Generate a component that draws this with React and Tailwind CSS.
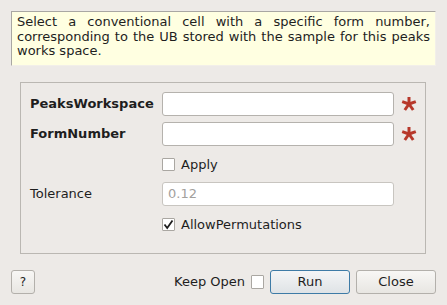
export default function App() {
  const font = { fontFamily: '"DejaVu Sans", sans-serif' }
  return (
    <div
      className="w-[447px] h-[305px] bg-[#edeae7] text-[13px] text-[#1e1e1e] flex flex-col px-[11px] pt-[11px]"
      style={font}
    >
      <div className="h-[55px] border border-[#a9a7a3] border-r-[#f2efe9] border-b-[#f2efe9] bg-[#ffffe1] px-[5px] pt-[3px] text-justify leading-[14.5px] text-[13px]">
        Select a conventional cell with a specific form number, corresponding to the UB stored with the
        sample for this peaks works space.
      </div>

      <div className="mt-[16px] ml-[9px] mr-[10px] h-[172px] border border-[#bab7b2] pl-[9px] pr-[6px] pt-[9px]">
        <div className="flex items-center h-[24px]">
          <div className="w-[132px] shrink-0 font-bold">PeaksWorkspace</div>
          <div className="w-[232px] shrink-0 h-[24px] bg-white border border-[#b5b2ad] rounded-[3px]" />
          <Star />
        </div>
        <div className="flex items-center h-[24px] mt-[6px]">
          <div className="w-[132px] shrink-0 font-bold">FormNumber</div>
          <div className="w-[232px] shrink-0 h-[24px] bg-white border border-[#b5b2ad] rounded-[3px]" />
          <Star />
        </div>
        <div className="flex items-center h-[13px] mt-[12px] pl-[132px]">
          <div className="w-[13px] h-[13px] bg-white border border-[#aaa7a2] rounded-[1px]" />
          <span className="ml-[6px]">Apply</span>
        </div>
        <div className="flex items-center h-[24px] mt-[11px]">
          <div className="w-[132px] shrink-0">Tolerance</div>
          <div className="w-[232px] shrink-0 h-[24px] bg-white border border-[#c8c5c0] rounded-[3px] pl-[5px] flex items-center text-[#a3a19d]">
            0.12
          </div>
        </div>
        <div className="flex items-center h-[13px] mt-[12px] pl-[132px]">
          <div className="w-[13px] h-[13px] bg-white border border-[#aaa7a2] rounded-[1px] flex items-center justify-center">
            <svg width="11" height="11" viewBox="0 0 11 11">
              <path d="M1.5 5.5 L4.2 9 L9.5 1.5" fill="none" stroke="#1e1e1e" strokeWidth="1.8" />
            </svg>
          </div>
          <span className="ml-[6px]">AllowPermutations</span>
        </div>
      </div>

      <div className="mt-[16px] flex items-center h-[24px]">
        <button className="w-[24px] h-[24px] border border-[#b3b0ab] rounded-[3px] bg-gradient-to-b from-[#f8f7f5] to-[#e8e6e2] text-[12px]">
          ?
        </button>
        <span className="ml-auto">Keep Open</span>
        <div className="ml-[6px] w-[13px] h-[14px] bg-white border border-[#aaa7a2] rounded-[1px]" />
        <button className="ml-[6px] w-[80px] h-[24px] border border-[#3e7ba6] rounded-[3px] bg-gradient-to-b from-[#f4f5f6] to-[#dfe3e6]">
          Run
        </button>
        <button className="ml-[6px] w-[80px] h-[24px] border border-[#b3b0ab] rounded-[3px] bg-gradient-to-b from-[#f8f7f5] to-[#e8e6e2]">
          Close
        </button>
      </div>
    </div>
  )
}

function Star() {
  return (
    <svg className="ml-[7px] shrink-0" width="16" height="16" viewBox="0 0 16 16">
      <g stroke="#b7382a" strokeWidth="3" strokeLinecap="butt">
        <line x1="8" y1="1" x2="8" y2="8.5" />
        <line x1="8" y1="8" x2="1.2" y2="5.6" />
        <line x1="8" y1="8" x2="14.8" y2="5.6" />
        <line x1="8" y1="8" x2="3.8" y2="14" />
        <line x1="8" y1="8" x2="12.2" y2="14" />
      </g>
    </svg>
  )
}
